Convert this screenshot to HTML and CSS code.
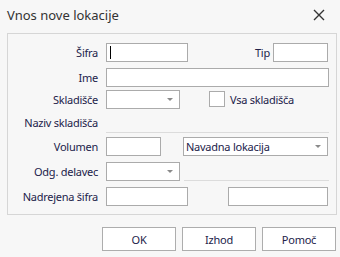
FILE: index.html
```html
<!DOCTYPE html>
<html lang="sl">
<head>
  <meta charset="UTF-8">
  <title>Vnos nove lokacije</title>
  <link rel="stylesheet" href="styles.css">
</head>
<body>
  <div class="dialog">
    <!-- naslov -->
    <div class="titlebar">
      <span class="title">Vnos nove lokacije</span>
      <svg class="close" width="12" height="12" viewBox="0 0 12 12">
        <path d="M1 1 L11 11 M11 1 L1 11" stroke="#333" stroke-width="1.4" fill="none"/>
      </svg>
    </div>

    <!-- polja -->
    <div class="panel">
      <div class="row">
        <span class="lbl">Šifra</span>
        <span class="field w-sifra"><i class="caret"></i></span>
        <span class="lbl-tip">Tip</span>
        <span class="field w-tip"></span>
      </div>
      <div class="row">
        <span class="lbl">Ime</span>
        <span class="field w-full"></span>
      </div>
      <div class="row">
        <span class="lbl">Skladišče</span>
        <span class="field select w-sel"><i class="arrow"></i></span>
        <span class="check"></span>
        <span class="check-text">Vsa skladišča</span>
      </div>
      <div class="row">
        <span class="lbl">Naziv skladišča</span>
        <span class="display-line"></span>
      </div>
      <div class="row">
        <span class="lbl">Volumen</span>
        <span class="field w-vol"></span>
        <span class="field select w-vrsta"><span class="sel-text">Navadna lokacija</span><i class="arrow"></i></span>
      </div>
      <div class="row">
        <span class="lbl">Odg. delavec</span>
        <span class="field select w-sel"><i class="arrow"></i></span>
        <span class="under-line"></span>
      </div>
      <div class="row">
        <span class="lbl">Nadrejena šifra</span>
        <span class="field w-sifra"></span>
        <span class="field w-naziv"></span>
      </div>
    </div>

    <!-- gumbi -->
    <div class="buttons">
      <button>OK</button>
      <button>Izhod</button>
      <button>Pomoč</button>
    </div>
  </div>
</body>
</html>
```

FILE: styles.css
```css
body {
    margin: 0;
    background: #f7f7f7;
    font-family: 'Noto Sans', 'Open Sans', sans-serif;
    font-size: 11px;
    letter-spacing: -0.25px;
    color: #22224a;
}

.dialog {
    width: 340px;
    height: 257px;
}

/* naslov */
.titlebar {
    height: 33px;
    display: flex;
    align-items: center;
    justify-content: space-between;
    padding: 0 15px 4px 7px;
    box-sizing: border-box;
}

.title {
    font-size: 13px;
    letter-spacing: 0;
    color: #333;
}

/* okvir s polji */
.panel {
    margin-left: 7px;
    width: 330px;
    height: 182px;
    box-sizing: border-box;
    border: 1px solid #d6d6d6;
    padding-top: 9px;
    display: grid;
    grid-template-rows: 25px 22px 23px 24px 25px 25px 19px;
}

.row {
    display: flex;
    align-items: flex-start;
}

.lbl {
    width: 90px;
    margin-right: 8px;
    text-align: right;
    line-height: 19px;
    white-space: nowrap;
}

.field {
    position: relative;
    height: 19px;
    box-sizing: border-box;
    border: 1px solid #ababab;
    background: #fff;
    display: block;
}

.w-sifra { width: 82px; }
.w-tip { width: 55px; }
.w-full { width: 223px; }
.w-sel { width: 74px; }
.w-vol { width: 55px; }
.w-vrsta { width: 145px; margin-left: 22px; }
.w-naziv { width: 100px; margin-left: 40px; }

.lbl-tip {
    margin-left: 67px;
    margin-right: 3px;
    line-height: 19px;
}

.caret {
    position: absolute;
    left: 3px;
    top: 2px;
    width: 1px;
    height: 13px;
    background: #000;
}

.arrow {
    position: absolute;
    right: 6px;
    top: 7px;
    border-left: 3px solid transparent;
    border-right: 3px solid transparent;
    border-top: 3px solid #8a8a8a;
}

.sel-text {
    display: block;
    padding-left: 2px;
    line-height: 17px;
}

.check {
    width: 16px;
    height: 16px;
    box-sizing: border-box;
    border: 1px solid #ababab;
    background: #fff;
    margin: 1px 0 0 29px;
}

.check-text {
    margin-left: 5px;
    line-height: 19px;
}

.display-line {
    width: 223px;
    height: 20px;
    box-sizing: border-box;
    border-bottom: 1px solid #dcdcdc;
}

.under-line {
    width: 145px;
    height: 19px;
    margin-left: 4px;
    box-sizing: border-box;
    border-bottom: 1px solid #dcdcdc;
}

/* gumbi */
.buttons {
    display: flex;
    justify-content: flex-end;
    gap: 6px;
    padding-right: 4px;
    margin-top: 12px;
}

button {
    width: 74px;
    height: 24px;
    border: 1px solid #adadad;
    background: #fff;
    font-family: 'Noto Sans', 'Open Sans', sans-serif;
    font-size: 11px;
    letter-spacing: -0.25px;
    color: #22224a;
    padding: 0;
}
```
